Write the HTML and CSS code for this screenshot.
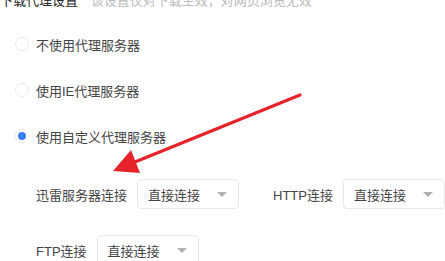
FILE: index.html
```html
<!DOCTYPE html>
<html lang="zh-CN">

<head>
  <meta charset="UTF-8">
  <meta name="viewport" content="width=device-width, initial-scale=1.0">
  <title>下载代理设置</title>
  <link rel="stylesheet" href="styles.css">
</head>

<body>
  <div class="container">
    <div class="header">
      <span class="title">下载代理设置</span>
      <span class="tip">该设置仅对下载生效，对网页浏览无效</span>
    </div>
    <div class="options">
      <label class="option"><span class="radio"></span>不使用代理服务器</label>
      <label class="option"><span class="radio"></span>使用IE代理服务器</label>
      <label class="option"><span class="radio checked"></span>使用自定义代理服务器</label>
    </div>
    <div class="fields">
      <div class="row">
        <div class="field">
          <span class="label">迅雷服务器连接</span>
          <div class="select"><span>直接连接</span><i class="caret"></i></div>
        </div>
        <div class="field">
          <span class="label">HTTP连接</span>
          <div class="select"><span>直接连接</span><i class="caret"></i></div>
        </div>
      </div>
      <div class="row">
        <div class="field">
          <span class="label">FTP连接</span>
          <div class="select"><span>直接连接</span><i class="caret"></i></div>
        </div>
      </div>
    </div>
  </div>

  <svg class="arrow" width="445" height="261" viewBox="0 0 445 261">
    <line x1="300" y1="95" x2="130" y2="164" stroke="#e6222b" stroke-width="3.2" stroke-linecap="round" />
    <polygon points="113,171 131,150 140,173" fill="#e6222b" />
  </svg>
</body>

</html>
```

FILE: styles.css
```css
* {
  margin: 0;
  padding: 0;
  box-sizing: border-box;
}

html,
body {
  width: 445px;
  height: 261px;
  overflow: hidden;
  background-color: #fff;
  font-family: "Liberation Sans", "Noto Sans CJK SC", sans-serif;
  font-size: 13px;
  color: #444;
}

.container {
  padding-left: 15px;
  margin-top: -9px;
}

.header {
  height: 20px;
  line-height: 20px;
  white-space: nowrap;
}

.title {
  color: #222;
  font-size: 13px;
  margin-left: -15px;
  margin-right: 9px;
}

.tip {
  color: #bbb;
}

.options {
  margin-top: 10px;
}

.option {
  display: flex;
  align-items: center;
  height: 46px;
}

.radio {
  width: 14px;
  height: 14px;
  border: 1px solid #ebebeb;
  border-radius: 50%;
  margin-right: 7px;
  display: flex;
  align-items: center;
  justify-content: center;
}

.radio.checked::after {
  content: "";
  width: 8px;
  height: 8px;
  border-radius: 50%;
  background-color: #3b7cf2;
}

.fields {
  margin-top: 20px;
  padding-left: 21px;
  display: flex;
  flex-direction: column;
  gap: 26px;
}

.row {
  display: flex;
  gap: 34px;
}

.field {
  display: flex;
  align-items: center;
  gap: 10px;
}

.select {
  width: 102px;
  height: 30px;
  border: 1px solid #e8e8e8;
  border-radius: 4px;
  display: flex;
  align-items: center;
  justify-content: space-between;
  padding: 0 11px 0 10px;
  color: #444;
}

.caret {
  width: 0;
  height: 0;
  border-left: 5px solid transparent;
  border-right: 5px solid transparent;
  border-top: 5px solid #b0b0b0;
}

.arrow {
  position: absolute;
  left: 0;
  top: 0;
  pointer-events: none;
}
```
